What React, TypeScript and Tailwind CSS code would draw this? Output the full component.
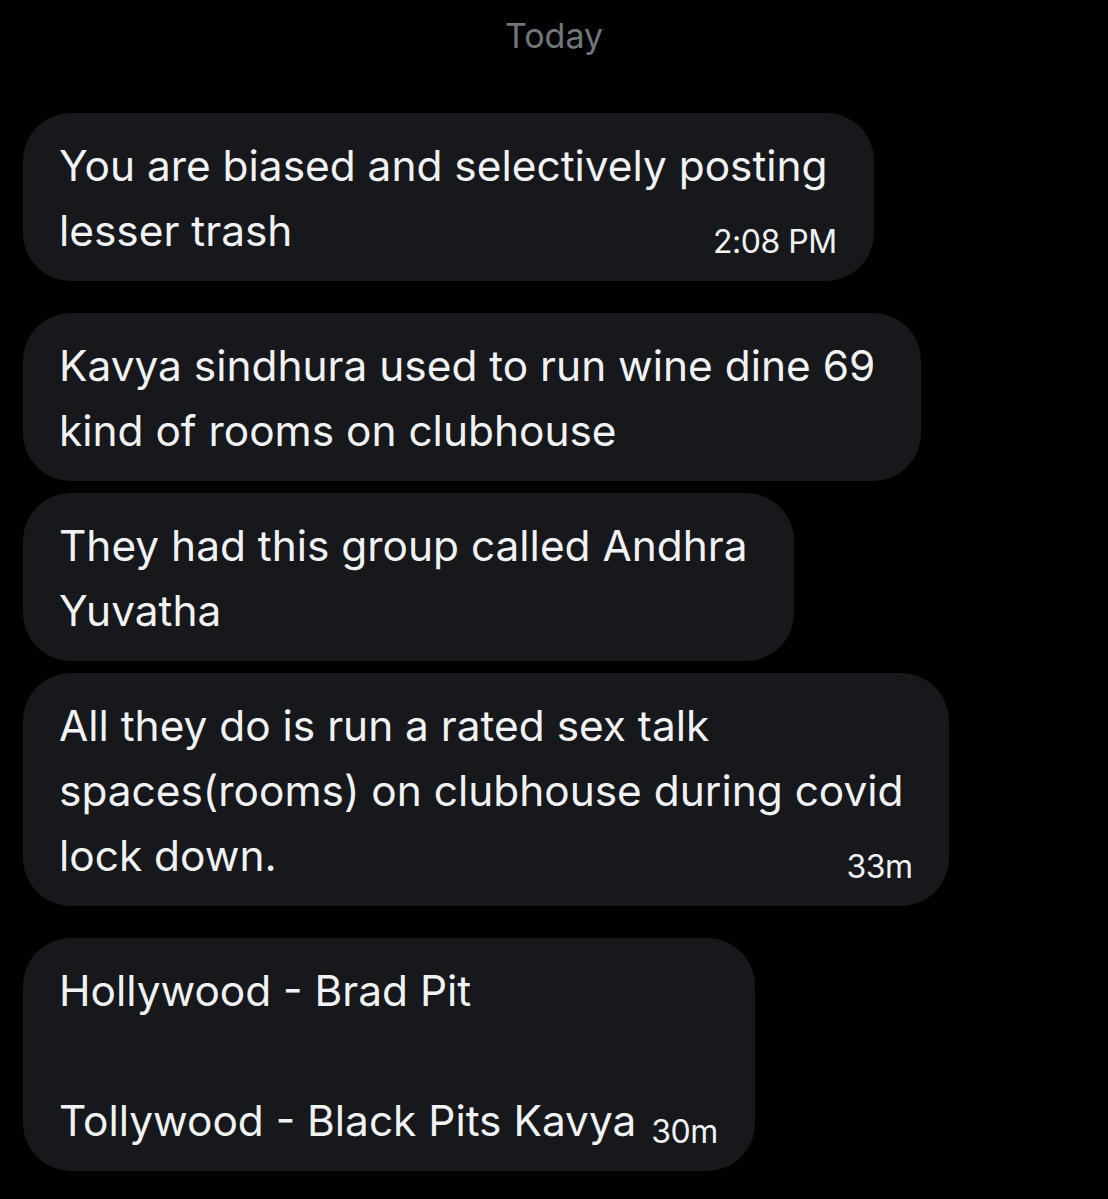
import React from 'react';

type Message = {
  id: number;
  lines: string[];
  time?: string;
  groupEnd?: boolean;
};

const messages: Message[] = [
  { id: 1, lines: ['You are biased and selectively posting', 'lesser trash'], time: '2:08 PM', groupEnd: true },
  { id: 2, lines: ['Kavya sindhura used to run wine dine 69', 'kind of rooms on clubhouse'] },
  { id: 3, lines: ['They had this group called Andhra', 'Yuvatha'] },
  {
    id: 4,
    lines: ['All they do is run a rated sex talk', 'spaces(rooms) on clubhouse during covid', 'lock down.'],
    time: '33m',
    groupEnd: true,
  },
  { id: 5, lines: ['Hollywood - Brad Pit', '', 'Tollywood - Black Pits Kavya'], time: '30m' },
];

const Bubble: React.FC<{ msg: Message }> = ({ msg }) => {
  const last = msg.lines.length - 1;
  return (
    <div className="w-fit rounded-[48px] bg-[#16181c] pl-[36px] pr-[37px] pt-[20px] pb-[18px] text-[42.4px] leading-[65px] text-[#f1f2f3]">
      {msg.lines.map((line, i) =>
        i === last && msg.time ? (
          <div key={i} className="flex h-[65px] items-baseline justify-between gap-[15px] whitespace-nowrap">
            <span>{line}</span>
            <span className="translate-y-[7px] text-[32px] leading-[32px] tracking-[-0.5px]">{msg.time}</span>
          </div>
        ) : (
          <div key={i} className="whitespace-nowrap pr-[9px]">
            {line || '\u00a0'}
          </div>
        )
      )}
    </div>
  );
};

const App: React.FC = () => {
  return (
    <div
      className="min-h-[1199px] w-full bg-black pt-[12px] pl-[23px]"
      style={{ fontFamily: 'Inter, "Noto Sans", sans-serif' }}
    >
      <div className="pr-[23px] text-center text-[34px] leading-[48px] text-[#71767b]">Today</div>
      <div className="mt-[53px] flex flex-col">
        {messages.map((msg) => (
          <div key={msg.id} className={msg.groupEnd ? 'mb-[32px]' : 'mb-[12px]'}>
            <Bubble msg={msg} />
          </div>
        ))}
      </div>
    </div>
  );
};

export default App;
